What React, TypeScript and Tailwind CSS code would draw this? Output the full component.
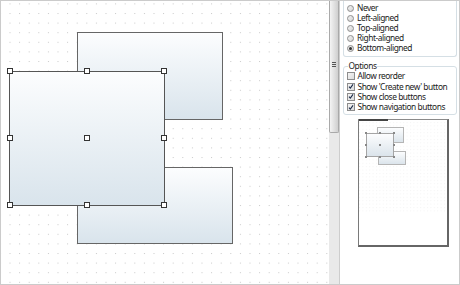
const handles = [
  "left-[6px] top-[67px]",
  "left-[83px] top-[67px]",
  "left-[160px] top-[67px]",
  "left-[6px] top-[134px]",
  "left-[83px] top-[134px]",
  "left-[160px] top-[134px]",
  "left-[6px] top-[201px]",
  "left-[83px] top-[201px]",
  "left-[160px] top-[201px]",
]

const miniHandles = [
  "left-[6px] top-[12px]",
  "left-[20px] top-[12px]",
  "left-[34px] top-[12px]",
  "left-[6px] top-[24px]",
  "left-[20px] top-[24px]",
  "left-[34px] top-[24px]",
  "left-[6px] top-[36px]",
  "left-[20px] top-[36px]",
  "left-[34px] top-[36px]",
]

const alignments = ["Never", "Left-aligned", "Top-aligned", "Right-aligned", "Bottom-aligned"]

const options = [
  { label: "Allow reorder", checked: false },
  { label: "Show 'Create new' button", checked: true },
  { label: "Show close buttons", checked: true },
  { label: "Show navigation buttons", checked: true },
]

export default function App() {
  return (
    <div className="flex h-[285px] w-[460px] overflow-hidden border border-[#cbcbcb] bg-white font-['Noto_Sans',sans-serif] text-[8.4px] tracking-[-0.45px] text-[#1b1b1b]">
      {/* Design canvas */}
      <div className="relative h-full w-[328px] shrink-0 overflow-hidden">
        <svg className="absolute inset-0 h-full w-full">
          <defs>
            <pattern id="grid" x="8.5" y="2.4" width="9.6" height="9.6" patternUnits="userSpaceOnUse">
              <rect width="1" height="1" fill="#c9c9c9" />
            </pattern>
          </defs>
          <rect width="100%" height="100%" fill="url(#grid)" />
        </svg>

        <div className="absolute left-[76px] top-[31px] h-[88px] w-[146px] border border-[#666] bg-linear-to-b from-[#fcfdfe] to-[#d9e4ec]" />
        <div className="absolute left-[76px] top-[166px] h-[77px] w-[156px] border border-[#666] bg-linear-to-b from-[#fcfdfe] to-[#d9e4ec]" />
        <div className="absolute left-[8px] top-[70px] h-[135px] w-[156px] border border-[#555] bg-linear-to-b from-[#fcfdfe] to-[#d9e4ec]" />

        {handles.map((pos) => (
          <div key={pos} className={`absolute h-[6px] w-[6px] border border-[#333] bg-white ${pos}`} />
        ))}
      </div>

      {/* Splitter / scrollbar */}
      <div className="flex h-full w-[11px] shrink-0 flex-col border-r border-[#cdcdcd] bg-[#e9e9e9]">
        <div className="flex h-[132px] flex-col items-center rounded-b-[2px] border border-t-0 border-[#a9a9a9] bg-linear-to-r from-[#f4f4f4] to-[#cfcfcf] pt-[61px]">
          <div className="flex w-[4px] flex-col gap-[1px]">
            <div className="h-px bg-[#555]" />
            <div className="h-px bg-[#555]" />
            <div className="h-px bg-[#555]" />
          </div>
        </div>
      </div>

      {/* Property panel */}
      <div className="flex w-[119px] shrink-0 flex-col">
        <div className="ml-[3px] w-[114px] rounded-b-[3px] border border-t-0 border-[#d5dfe5] pb-[3px] pl-[2.5px] pt-[2px]">
          {alignments.map((label, i) => (
            <div key={label} className="flex h-[10px] items-center gap-[3.5px] leading-[10px]">
              <Radio checked={i === alignments.length - 1} />
              <span>{label}</span>
            </div>
          ))}
        </div>

        <fieldset className="ml-[3px] mt-[4px] w-[114px] rounded-[3px] border border-[#d5dfe5] pb-[1px] pl-[2.5px]">
          <legend className="ml-[1px] px-[1px] leading-[10px]">Options</legend>
          {options.map((o) => (
            <div key={o.label} className="flex h-[10.4px] items-center gap-[3px] leading-[10px]">
              <Checkbox checked={o.checked} />
              <span className="whitespace-nowrap">{o.label}</span>
            </div>
          ))}
        </fieldset>

        {/* Preview thumbnail */}
        <div className="relative ml-[18px] mt-[4px] h-[128px] w-[91px] border-b-2 border-l border-r-2 border-t border-b-[#666] border-l-[#7a7a7a] border-r-[#666] border-t-[#8a8a8a] bg-white">
          <div className="absolute -top-px left-0 h-[2px] w-[29px] bg-[#444]" />
          <svg className="absolute left-0 top-[2px] h-[90px] w-[88px]">
            <defs>
              <pattern id="mini" width="3.4" height="3.4" patternUnits="userSpaceOnUse">
                <rect width="1" height="1" fill="#f4f4f4" />
              </pattern>
            </defs>
            <rect width="100%" height="100%" fill="url(#mini)" />
          </svg>
          <div className="absolute left-[18px] top-[7px] h-[16px] w-[27px] border border-[#b5b5b5] bg-linear-to-b from-[#fcfdfe] to-[#dbe4eb]" />
          <div className="absolute left-[19px] top-[31px] h-[14px] w-[28px] border border-[#b5b5b5] bg-linear-to-b from-[#fcfdfe] to-[#dbe4eb]" />
          <div className="absolute left-[7px] top-[13px] h-[24px] w-[28px] border border-[#a5a5a5] bg-linear-to-b from-[#fcfdfe] to-[#dbe4eb]" />
          {miniHandles.map((pos) => (
            <div key={pos} className={`absolute h-[2px] w-[2px] bg-[#888] ${pos}`} />
          ))}
        </div>
      </div>
    </div>
  )
}

function Radio({ checked }: { checked?: boolean }) {
  return (
    <span className="flex h-[7px] w-[7px] shrink-0 items-center justify-center rounded-full border border-[#8d8d8d] bg-linear-to-br from-[#f2f2f2] to-[#d6d6d6]">
      {checked && <span className="h-[3px] w-[3px] rounded-full bg-[#333]" />}
    </span>
  )
}

function Checkbox({ checked }: { checked?: boolean }) {
  return (
    <span className="flex h-[8px] w-[8px] shrink-0 items-center justify-center border border-[#8d8d8d] bg-linear-to-br from-[#f4f4f4] to-[#dcdcdc]">
      {checked && (
        <svg viewBox="0 0 8 8" className="h-[7px] w-[7px]">
          <path d="M1.3 4.2 3.1 6.2 6.7 1.2" fill="none" stroke="#1a2a48" strokeWidth="1.4" />
        </svg>
      )}
    </span>
  )
}
